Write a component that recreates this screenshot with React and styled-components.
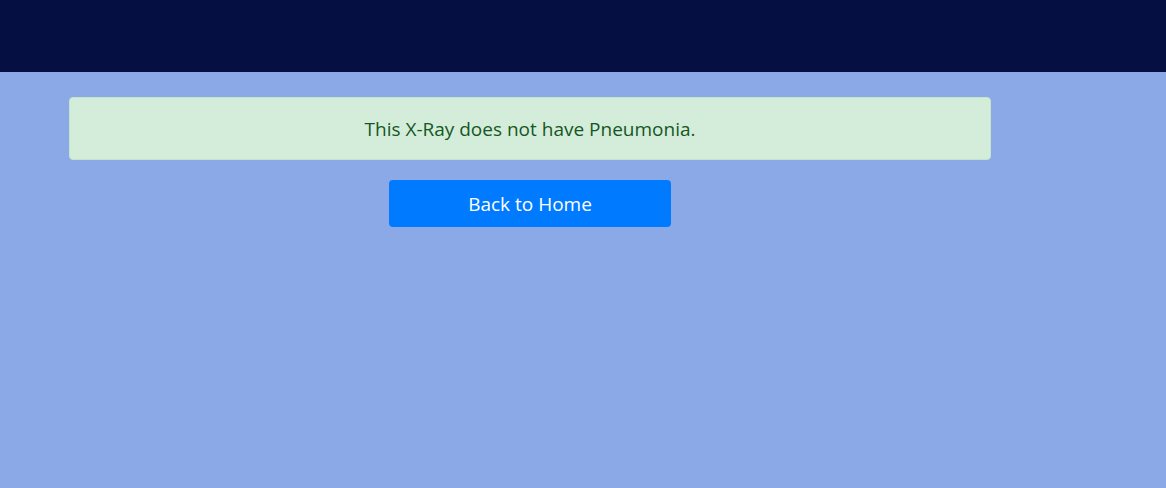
import React from 'react'
import styled, { createGlobalStyle } from 'styled-components'

const GlobalStyle = createGlobalStyle`
  html, body {
    margin: 0;
    padding: 0;
    background: #8aa9e6;
    font-family: "Open Sans", "Noto Sans", sans-serif;
  }
`

const Page = styled.div`
  min-height: 488px;
  background: #8aa9e6;
`

const Header = styled.header`
  height: 72px;
  background: #050f42;
`

const Content = styled.main`
  width: 922px;
  margin-left: 69px;
  padding-top: 25px;
  display: flex;
  flex-direction: column;
  align-items: center;
`

const Alert = styled.div`
  box-sizing: border-box;
  width: 100%;
  height: 63px;
  display: flex;
  align-items: center;
  justify-content: center;
  background: #d4edda;
  border: 1px solid #c3e6cb;
  border-radius: 4px;
  color: #155724;
  font-size: 19px;
  margin-bottom: 20px;
`

const Button = styled.button`
  width: 282px;
  height: 47px;
  background: #007bff;
  color: #fff;
  border: none;
  border-radius: 4px;
  font-family: inherit;
  font-size: 19px;
  cursor: pointer;
`

export default function App() {
  return (
    <Page>
      <GlobalStyle />
      <Header />
      <Content>
        <Alert>This X-Ray does not have Pneumonia.</Alert>
        <Button>Back to Home</Button>
      </Content>
    </Page>
  )
}
